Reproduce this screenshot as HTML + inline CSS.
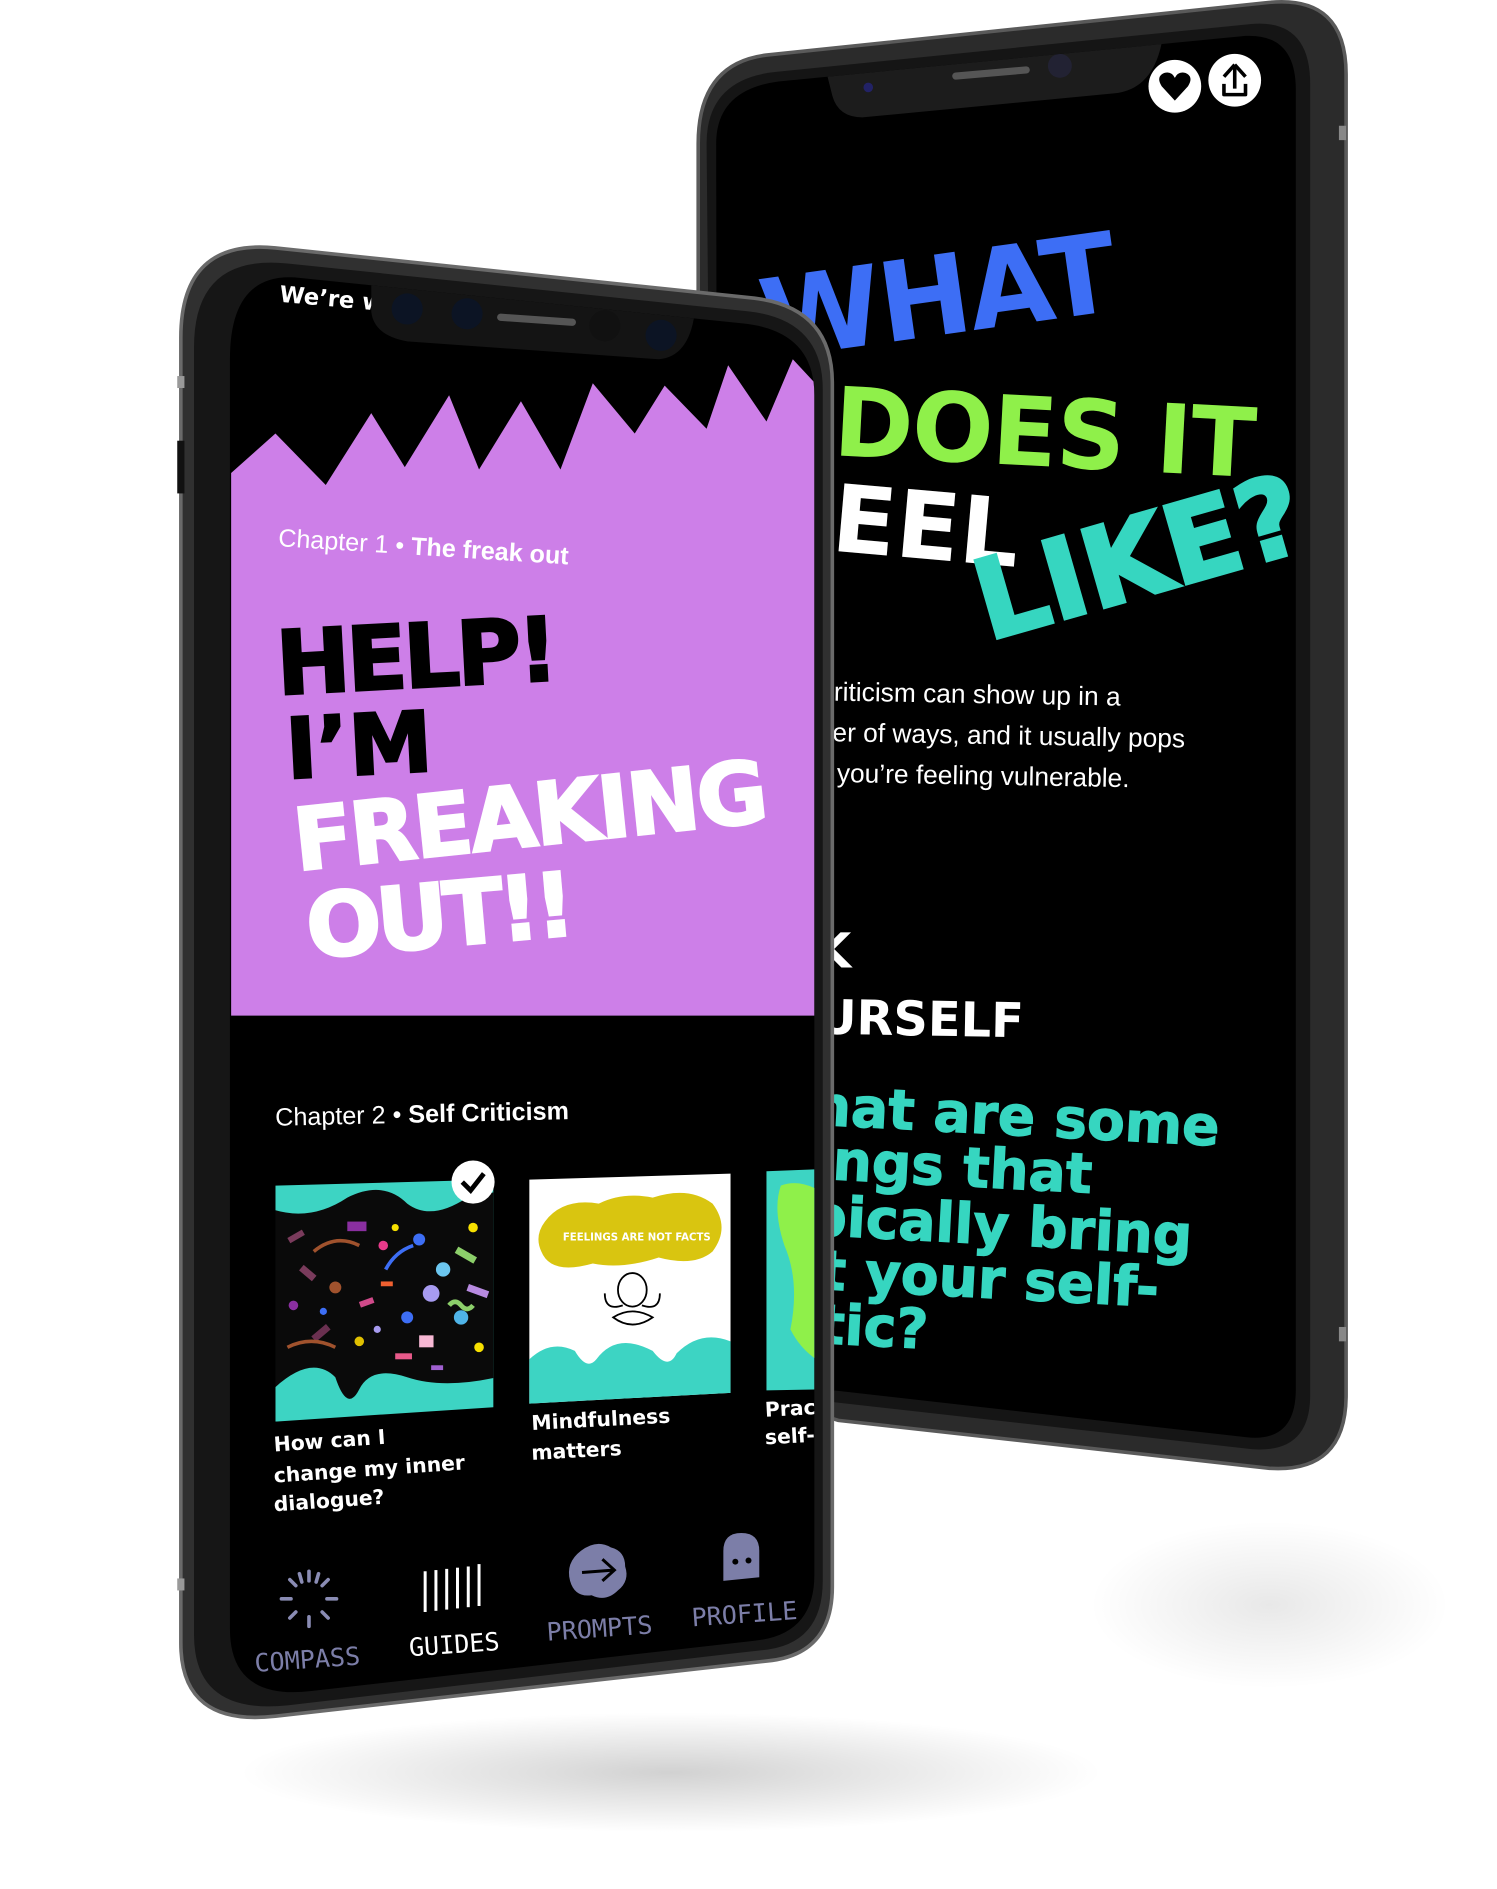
<!DOCTYPE html>
<html><head><meta charset="utf-8"><style>
html,body{margin:0;padding:0;background:#fff;width:1497px;height:1889px;overflow:hidden}
svg{display:block}
.h{font-family:"DejaVu Sans","Liberation Sans",sans-serif;font-weight:bold}
.s{font-family:"Liberation Sans",sans-serif}
.m{font-family:"DejaVu Sans Mono","Liberation Mono",monospace}
</style></head><body>
<svg width="1497" height="1889" viewBox="0 0 1250 1577.3" preserveAspectRatio="none">
<defs>
<radialGradient id="sh" cx="50%" cy="50%" r="50%"><stop offset="0" stop-color="#000" stop-opacity=".18"/><stop offset="1" stop-color="#000" stop-opacity="0"/></radialGradient>
<clipPath id="backScr"><path d="M650,68 L1040,30 Q1082,28 1082,75 L1082,1160 Q1082,1205 1040,1200 L600,1150 L598,120 Q598,75 650,68 Z"/></clipPath>
<clipPath id="frontScr"><path d="M250,232 L620,270 Q680,276 680,330 L680,1315 Q680,1365 630,1370 L260,1412 Q192,1420 192,1360 L192,300 Q192,226 250,232 Z"/></clipPath>
<clipPath id="c1"><polygon points="230,990 412,985 412,1175 230,1187"/></clipPath>
</defs>
<ellipse cx="560" cy="1480" rx="360" ry="50" fill="url(#sh)"/>
<ellipse cx="1060" cy="1340" rx="150" ry="70" fill="url(#sh)" opacity=".5"/>

<path d="M640,46 L1060,2 Q1124,-4 1124,62 L1124,1165 Q1124,1230 1060,1226 L700,1186 L583,1150 L583,120 Q583,53 640,46 Z" fill="#2b2b2b" stroke="#5a5a5a" stroke-width="3"/>
<rect x="1118" y="105" width="6" height="12" fill="#888"/>
<rect x="1118" y="1108" width="6" height="12" fill="#888"/>
<path d="M648,60 L1045,20 Q1094,16 1094,70 L1094,1165 Q1094,1214 1045,1210 L600,1160 L590,120 Q590,66 648,60 Z" fill="#151515"/>
<path d="M650,68 L1040,30 Q1082,28 1082,75 L1082,1160 Q1082,1205 1040,1200 L600,1150 L598,120 Q598,75 650,68 Z" fill="#000"/>
<g clip-path="url(#backScr)">
<path d="M690,60 L970,36 Q962,75 930,78 L720,98 Q700,98 695,80 Z" fill="#1c1c1c"/>
<rect x="795" y="58" width="65" height="6" rx="3" fill="#555" transform="rotate(-5 827 61)"/>
<circle cx="885" cy="55" r="10" fill="#223"/>
<circle cx="725" cy="73" r="4" fill="#226"/>
<text class="h" x="640" y="300" font-size="92" fill="#3d6ef5" transform="rotate(-8 640 300)" letter-spacing="-2">WHAT</text>
<text class="h" x="695" y="380" font-size="80" fill="#8ff04a" transform="rotate(3 695 380)" letter-spacing="-1">DOES IT</text>
<text class="h" x="640" y="455" font-size="78" fill="#fff" transform="rotate(5 640 455)">FEEL</text>
<text class="h" x="825" y="535" font-size="92" fill="#36d6c0" transform="rotate(-16 825 535)" stroke="#36d6c0" stroke-width="3">LIKE?</text>
<text class="s" x="640" y="584" font-size="22" fill="#fff" transform="rotate(1 640 584)">Self-criticism can show up in a</text>
<text class="s" x="640" y="618" font-size="22" fill="#fff" transform="rotate(1 640 618)">number  of ways, and it usually pops</text>
<text class="s" x="640" y="652" font-size="22" fill="#fff" transform="rotate(1 640 652)">when you’re feeling vulnerable.</text>
<text class="h" x="620" y="808" font-size="40" fill="#fff">ASK</text>
<text class="h" x="621" y="862" font-size="40" fill="#fff" transform="rotate(1 621 862)">YOURSELF</text>
<g fill="#36d6c0" font-size="46" class="h" transform="rotate(3 700 930)" stroke="#36d6c0" stroke-width="1">
<text x="627" y="940">What are some</text>
<text x="627" y="985">things that</text>
<text x="627" y="1032">typically bring</text>
<text x="627" y="1077">out your self-</text>
<text x="627" y="1122">critic?</text>
</g>
</g>
<circle cx="981" cy="72" r="22" fill="#fff"/>
<path d="M981,84 L970,72 Q965,64 972,61 Q978,59 981,65 Q984,59 990,61 Q997,64 992,72 Z" fill="#000"/>
<circle cx="1031" cy="67" r="22" fill="#fff"/>
<path d="M1031,54 L1022,64 M1031,54 L1040,64 M1031,55 L1031,74 M1022,70 L1022,79 L1040,79 L1040,70" stroke="#000" stroke-width="3" fill="none" stroke-linejoin="round"/>

<path d="M230,207 L630,249 Q695,257 695,320 L695,1325 Q695,1382 640,1387 L230,1433 Q151,1442 151,1372 L151,282 Q151,199 230,207 Z" fill="#303030" stroke="#6a6a6a" stroke-width="3"/>
<rect x="148" y="368" width="6" height="44" fill="#111"/>
<rect x="148" y="314" width="6" height="10" fill="#999"/>
<rect x="148" y="1318" width="6" height="10" fill="#999"/>
<path d="M240,220 L625,260 Q687,267 687,325 L687,1320 Q687,1374 635,1378 L240,1424 Q162,1432 162,1365 L162,290 Q162,212 240,220 Z" fill="#161616"/>
<path d="M250,232 L620,270 Q680,276 680,330 L680,1315 Q680,1365 630,1370 L260,1412 Q192,1420 192,1360 L192,300 Q192,226 250,232 Z" fill="#000"/>
<g clip-path="url(#frontScr)">
<polygon points="193,395 230,362 272,405 310,345 338,390 375,330 400,392 435,335 468,392 495,320 530,362 555,322 590,358 608,305 640,352 662,300 690,330 690,848 193,848" fill="#cd7fe8"/>
<text class="h" x="233" y="252" font-size="19" fill="#fff" transform="rotate(5 233 252)">We’re w</text>
<path d="M310,238 L580,262 Q575,298 550,300 L340,285 Q312,280 310,260 Z" fill="#141414"/>
<circle cx="340" cy="258" r="13" fill="#0c1424"/>
<circle cx="390" cy="262" r="13" fill="#0c1424"/>
<circle cx="505" cy="272" r="13" fill="#111"/>
<circle cx="552" cy="280" r="13" fill="#0c1424"/>
<rect x="415" y="264" width="66" height="6" rx="3" fill="#555" transform="rotate(4 448 267)"/>
<text class="s" x="232" y="456" font-size="21" fill="#fff" transform="rotate(3.6 232 456)">Chapter 1 • <tspan font-weight="bold">The freak out</tspan></text>
<text class="h" x="232" y="580" font-size="74" fill="#000" transform="rotate(-3 232 580)" letter-spacing="-3" stroke="#000" stroke-width="2">HELP!</text>
<text class="h" x="240" y="650" font-size="70" fill="#000" transform="rotate(-3 240 650)" stroke="#000" stroke-width="2">I’M</text>
<text class="h" x="248" y="727" font-size="72" fill="#fff" transform="rotate(-6 248 727)" letter-spacing="-2" stroke="#fff" stroke-width="2">FREAKING</text>
<text class="h" x="258" y="800" font-size="74" fill="#fff" transform="rotate(-5 258 800)" letter-spacing="-4" stroke="#fff" stroke-width="2">OUT!!</text>
<text class="s" x="230" y="940" font-size="21" fill="#fff" transform="rotate(-1.3 230 940)">Chapter 2 • <tspan font-weight="bold">Self Criticism</tspan></text>
<g clip-path="url(#c1)">
<rect x="228" y="980" width="190" height="210" fill="#3dd4c3"/>
<path d="M228,1010 Q260,1020 290,1000 Q320,985 340,1005 Q360,1020 390,1000 L415,995 L415,1150 Q370,1160 340,1150 Q310,1140 300,1160 Q290,1180 280,1150 Q260,1130 228,1160 Z" fill="#0a0a0a"/>
<g>
<rect x="240" y="1030" width="14" height="5" fill="#7a3b5c" transform="rotate(-30 247 1032)"/>
<rect x="290" y="1020" width="16" height="8" fill="#8a2fa0"/>
<circle cx="320" cy="1040" r="4" fill="#e83a8a"/>
<circle cx="350" cy="1035" r="5" fill="#3d6ef5"/>
<circle cx="370" cy="1060" r="6" fill="#6cc7f0"/>
<rect x="380" y="1045" width="18" height="6" fill="#8ccf6a" transform="rotate(30 389 1048)"/>
<circle cx="360" cy="1080" r="7" fill="#a79bf0"/>
<rect x="250" y="1060" width="14" height="6" fill="#7a3b5c" transform="rotate(40 257 1063)"/>
<circle cx="280" cy="1075" r="5" fill="#a0522d"/>
<rect x="300" y="1085" width="12" height="5" fill="#d04a8a" transform="rotate(-20 306 1087)"/>
<circle cx="340" cy="1100" r="5" fill="#3d6ef5"/>
<rect x="350" y="1115" width="12" height="10" fill="#f7b8d4"/>
<circle cx="385" cy="1100" r="6" fill="#4fb4e8"/>
<rect x="260" y="1110" width="16" height="6" fill="#6a3050" transform="rotate(-40 268 1113)"/>
<circle cx="300" cy="1120" r="4" fill="#e0c000"/>
<rect x="330" y="1130" width="14" height="5" fill="#e85a8a"/>
<circle cx="400" cy="1125" r="4" fill="#f7e000"/>
<rect x="390" y="1075" width="18" height="6" fill="#b78ae0" transform="rotate(20 399 1078)"/>
<circle cx="245" cy="1090" r="4" fill="#8a2fa0"/>
<circle cx="395" cy="1025" r="4" fill="#f7e000"/>
<path d="M262,1045 Q280,1030 300,1040" stroke="#a0522d" stroke-width="3" fill="none"/>
<path d="M322,1060 Q330,1045 345,1040" stroke="#3d6ef5" stroke-width="3" fill="none"/>
<path d="M375,1090 q5,-6 10,0 q5,6 10,0" stroke="#8ccf6a" stroke-width="4" fill="none"/>
<path d="M240,1125 Q260,1115 280,1125" stroke="#a0522d" stroke-width="3" fill="none"/>
<rect x="318" y="1070" width="10" height="4" fill="#f06030"/>
<circle cx="270" cy="1095" r="3" fill="#3d6ef5"/>
<circle cx="315" cy="1110" r="3" fill="#a79bf0"/>
<rect x="360" y="1140" width="10" height="4" fill="#a060d0"/>
<circle cx="330" cy="1025" r="3" fill="#f7e000"/>
</g>
</g>
<circle cx="395" cy="987" r="18" fill="#fff"/>
<path d="M386,987 L393,994 L404,980" stroke="#000" stroke-width="4" fill="none"/>
<polygon points="442,985 610,980 610,1163 442,1172" fill="#fff"/>
<path d="M455,1020 Q470,1000 500,1005 Q520,995 545,1000 Q575,990 595,1005 Q610,1025 595,1045 Q580,1058 550,1050 Q520,1060 495,1055 Q460,1065 452,1045 Q446,1032 455,1020 Z" fill="#d9c510"/>
<text class="h" x="470" y="1036" font-size="8.5" fill="#fff">FEELINGS ARE NOT FACTS</text>
<ellipse cx="528" cy="1077" rx="12" ry="14" fill="none" stroke="#000" stroke-width="1.5"/>
<path d="M505,1080 Q505,1095 520,1090 M551,1080 Q551,1095 536,1090 M512,1100 Q528,1090 545,1100 Q528,1112 512,1100 Z" fill="none" stroke="#000" stroke-width="1.5"/>
<path d="M442,1172 L442,1135 Q460,1118 480,1128 Q490,1145 498,1135 Q515,1112 545,1128 Q558,1145 565,1130 Q585,1110 610,1120 L610,1163 Z" fill="#3dd4c3"/>
<polygon points="640,978 690,976 690,1160 640,1161" fill="#3dd4c3"/>
<path d="M652,990 Q665,985 680,992 L690,992 L690,1140 Q670,1130 660,1110 Q668,1070 655,1040 Q645,1010 652,990 Z" fill="#8ff04a"/>
<g class="h" font-size="17" fill="#fff">
<text x="229" y="1212" transform="rotate(-4 229 1212)">How can I</text>
<text x="229" y="1238" transform="rotate(-4 229 1238)">change my inner</text>
<text x="229" y="1262" transform="rotate(-4 229 1262)">dialogue?</text>
<text x="444" y="1194" transform="rotate(-3 444 1194)">Mindfulness</text>
<text x="444" y="1219" transform="rotate(-3 444 1219)">matters</text>
<text x="639" y="1183" transform="rotate(-3 639 1183)">Practice</text>
<text x="639" y="1206" transform="rotate(-3 639 1206)">self-love</text>
</g>
<g stroke="#8a8cb4" stroke-width="3" stroke-linecap="round">
<line x1="258" y1="1312" x2="258" y2="1320"/><line x1="258" y1="1350" x2="258" y2="1358"/>
<line x1="235" y1="1335" x2="243" y2="1335"/><line x1="273" y1="1335" x2="281" y2="1335"/>
<line x1="242" y1="1319" x2="247" y2="1324"/><line x1="269" y1="1346" x2="274" y2="1351"/>
<line x1="274" y1="1319" x2="269" y2="1324"/><line x1="247" y1="1346" x2="242" y2="1351"/>
<line x1="250" y1="1314" x2="252" y2="1321"/><line x1="266" y1="1314" x2="264" y2="1321"/>
</g>
<g stroke="#fff" stroke-width="2.5">
<line x1="355" y1="1312" x2="355" y2="1346"/><line x1="364" y1="1311" x2="364" y2="1345"/><line x1="373" y1="1310" x2="373" y2="1344"/><line x1="382" y1="1309" x2="382" y2="1343"/><line x1="391" y1="1308" x2="391" y2="1342"/><line x1="400" y1="1306" x2="400" y2="1341"/>
</g>
<path d="M485,1295 Q498,1285 510,1292 Q522,1295 522,1308 Q526,1320 516,1328 Q506,1338 494,1332 Q480,1334 476,1320 Q472,1305 485,1295 Z" fill="#7c7ea8"/>
<path d="M486,1313 L512,1311 M503,1302 L513,1311 L503,1320" stroke="#000" stroke-width="2.5" fill="none"/>
<path d="M604,1320 L604,1295 Q604,1280 619,1280 Q634,1280 634,1295 L634,1317 Z" fill="#7c7ea8"/>
<circle cx="614" cy="1304" r="2.5" fill="#000"/><circle cx="625" cy="1303" r="2.5" fill="#000"/>
<g class="m" font-size="21">
<text x="213" y="1396" fill="#7c7ea8" transform="rotate(-4 213 1396)">COMPASS</text>
<text x="342" y="1383" fill="#fff" transform="rotate(-4 342 1383)">GUIDES</text>
<text x="457" y="1370" fill="#7c7ea8" transform="rotate(-4 457 1370)">PROMPTS</text>
<text x="578" y="1358" fill="#7c7ea8" transform="rotate(-4 578 1358)">PROFILE</text>
</g>
</g>
</svg>
</body></html>
